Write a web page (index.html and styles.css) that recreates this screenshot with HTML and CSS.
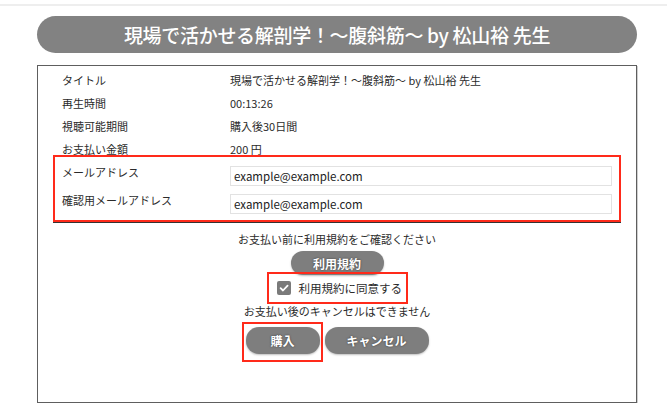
FILE: index.html
```html
<!DOCTYPE html>
<html lang="ja">
<head>
<meta charset="utf-8">
<title>購入確認</title>
<link rel="stylesheet" href="styles.css">
</head>
<body>
<div class="topline"></div>
<div class="page">
  <h1 class="title">現場で活かせる解剖学！〜腹斜筋〜 by 松山裕 先生</h1>
  <div class="box">
    <div class="info">
      <div class="row"><div class="label">タイトル</div><div class="value">現場で活かせる解剖学！〜腹斜筋〜 by 松山裕 先生</div></div>
      <div class="row"><div class="label">再生時間</div><div class="value">00:13:26</div></div>
      <div class="row"><div class="label">視聴可能期間</div><div class="value">購入後30日間</div></div>
      <div class="row"><div class="label">お支払い金額</div><div class="value">200 円</div></div>
      <div class="mail">
        <div class="mrow"><div class="label">メールアドレス</div><input class="field" type="text" value="example@example.com"></div>
        <div class="mrow"><div class="label">確認用メールアドレス</div><input class="field" type="text" value="example@example.com"></div>
      </div>
    </div>
    <div class="actions">
      <p class="note">お支払い前に利用規約をご確認ください</p>
      <button class="pill terms">利用規約</button>
      <label class="agree">
        <span class="check"><svg width="10" height="10" viewBox="0 0 10 10"><path d="M1.6 5.2 L4 7.5 L8.6 2.6" fill="none" stroke="#fff" stroke-width="1.8" stroke-linecap="round" stroke-linejoin="round"/></svg></span>
        <span>利用規約に同意する</span>
      </label>
      <p class="note note2">お支払い後のキャンセルはできません</p>
      <div class="btns">
        <div class="buywrap"><button class="pill buy">購入</button></div>
        <button class="pill cancel">キャンセル</button>
      </div>
    </div>
  </div>
</div>
</body>
</html>
```
FILE: styles.css
```css
* { box-sizing: border-box; }
html, body { margin: 0; padding: 0; background: #fff; }
body {
  font-family: "Noto Sans CJK JP", "Noto Sans", sans-serif;
  color: #2b2b2b;
  font-size: 11px;
}
.topline {
  margin-top: 4px;
  height: 2px;
  background: #eeeeee;
}
.page {
  width: 600px;
  margin-left: 37px;
  padding-top: 10px;
}
.title {
  margin: 0;
  height: 37px;
  border-radius: 19px;
  background: #828282;
  color: #fff;
  font-size: 19px;
  font-weight: 500;
  line-height: 37px;
  text-align: center;
  letter-spacing: -0.3px;
}
.box {
  margin-top: 12px;
  height: 338px;
  border: 1px solid #5e5e5e;
  box-shadow: 1px 1px 0 #cfcfcf;
  padding: 3px 15px 0;
}
.info {
  border-bottom: 1px solid #333;
}
.row {
  display: grid;
  grid-template-columns: 177px 1fr;
  height: 23px;
  line-height: 23px;
}
.label { padding-left: 9px; }
.mail {
  margin-top: -6px;
  border: 2px solid #ff2a1a;
  padding: 6px 7px 6px 7px;
  display: flex;
  flex-direction: column;
  gap: 5px;
}
.mrow {
  display: grid;
  grid-template-columns: 168px 1fr;
  align-items: start;
}
.mrow .label { padding-left: 0; line-height: 18px; }
.field {
  margin-top: 3px;
  height: 20px;
  border: 1px solid #e2e2e2;
  padding: 0 3px;
  font-family: "Noto Sans CJK JP", "Noto Sans", sans-serif;
  font-size: 11.5px;
  color: #222;
  background: #fff;
  width: 100%;
}
.actions {
  display: flex;
  flex-direction: column;
  align-items: center;
}
.note {
  margin: 8px 0 0;
  line-height: 16px;
}
.pill {
  border: none;
  background: #7e7e7e;
  color: #fff;
  font-family: "Noto Sans CJK JP", "Noto Sans", sans-serif;
  font-weight: bold;
  font-size: 12px;
  text-shadow: 0 0 2px #333;
  box-shadow: 0 1px 2px rgba(0,0,0,0.25);
  padding: 0;
  cursor: pointer;
}
.terms {
  margin-top: 4px;
  width: 93px;
  height: 24px;
  border-radius: 12px;
}
.agree {
  margin-top: -3px;
  width: 141px;
  height: 32px;
  border: 2px solid #ff2a1a;
  display: flex;
  align-items: center;
  gap: 8px;
  padding-left: 8px;
  font-size: 11.5px;
}
.check {
  width: 14px;
  height: 14px;
  border-radius: 2px;
  background: #7a7a7a;
  display: flex;
  align-items: center;
  justify-content: center;
}
.note2 { margin-top: -1px; }
.btns {
  margin-top: 3px;
  display: flex;
  align-items: flex-start;
  gap: 2px;
  margin-right: 4px;
}
.buywrap {
  border: 2px solid #ff2a1a;
  padding: 3px 1px 6px 2px;
}
.buy {
  width: 74px;
  height: 27px;
  border-radius: 13px;
  display: block;
}
.cancel {
  margin-top: 5px;
  width: 104px;
  height: 27px;
  border-radius: 13px;
}
```
